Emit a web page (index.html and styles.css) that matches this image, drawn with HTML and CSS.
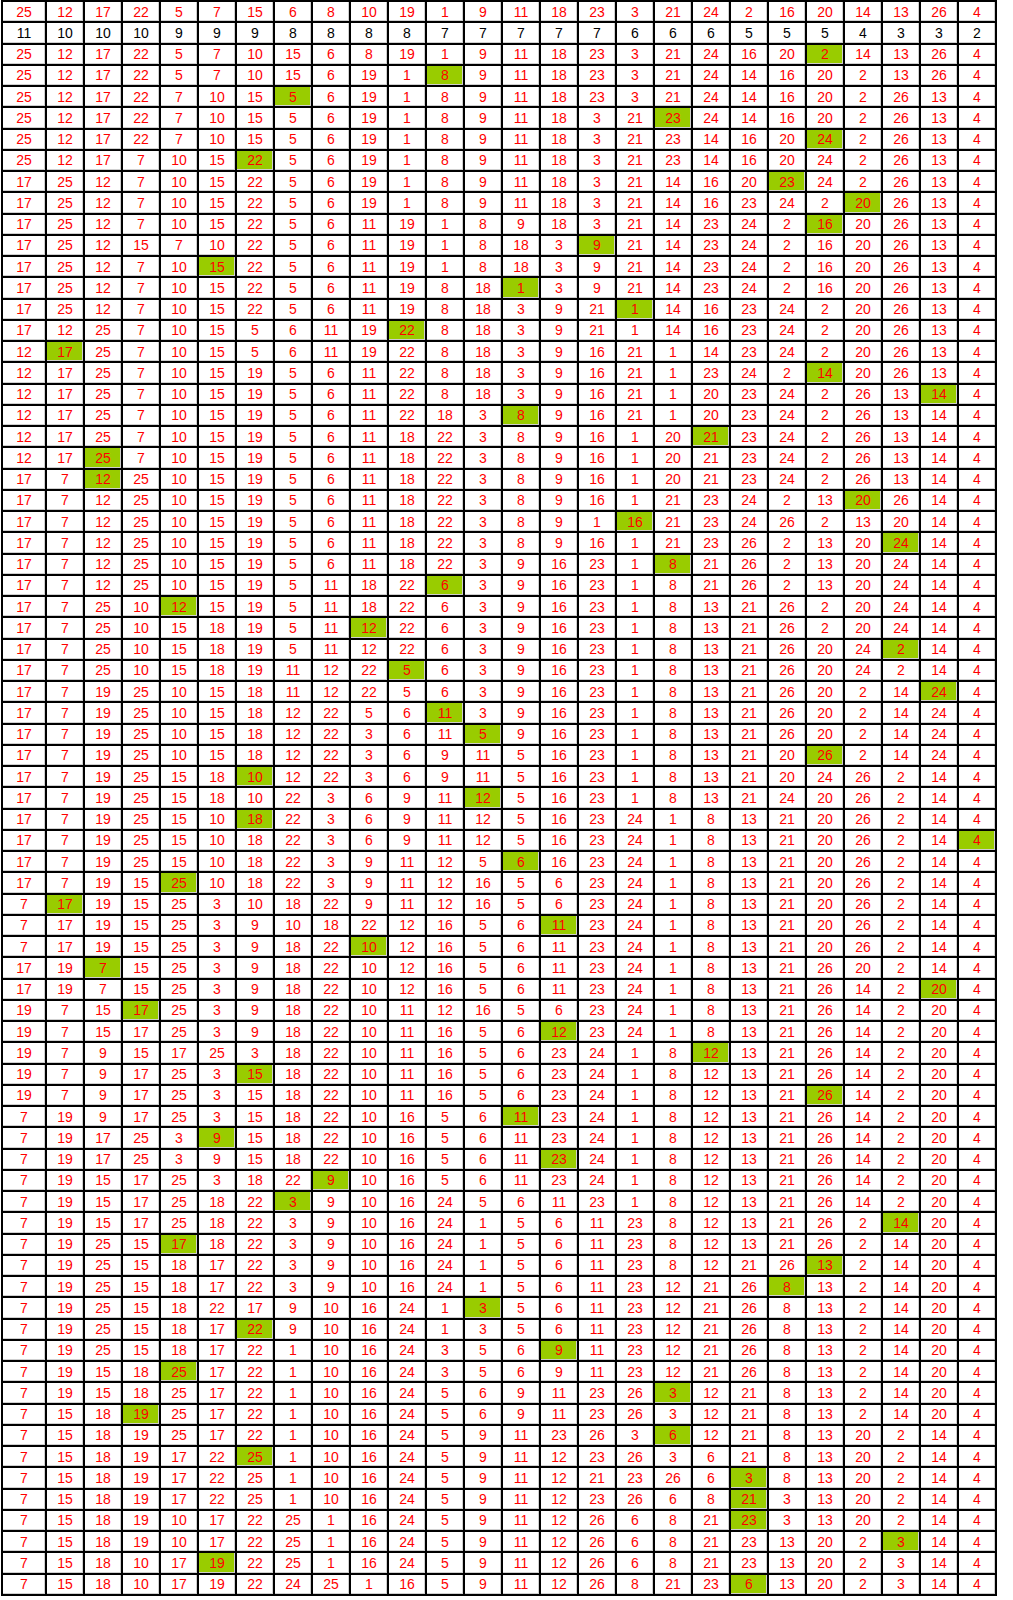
FILE: index.html
```html
<!DOCTYPE html>
<html>
<head>
<meta charset="utf-8">
<title>Table</title>
<link rel="stylesheet" href="styles.css">
</head>
<body>
<table class="grid">
<tbody>
<tr><td>25<td>12<td>17<td>22<td>5<td>7<td>15<td>6<td>8<td>10<td>19<td>1<td>9<td>11<td>18<td>23<td>3<td>21<td>24<td>2<td>16<td>20<td>14<td>13<td>26<td>4
<tr class="count"><td>11<td>10<td>10<td>10<td>9<td>9<td>9<td>8<td>8<td>8<td>8<td>7<td>7<td>7<td>7<td>7<td>6<td>6<td>6<td>5<td>5<td>5<td>4<td>3<td>3<td>2
<tr><td>25<td>12<td>17<td>22<td>5<td>7<td>10<td>15<td>6<td>8<td>19<td>1<td>9<td>11<td>18<td>23<td>3<td>21<td>24<td>16<td>20<td class="h">2<td>14<td>13<td>26<td>4
<tr><td>25<td>12<td>17<td>22<td>5<td>7<td>10<td>15<td>6<td>19<td>1<td class="h">8<td>9<td>11<td>18<td>23<td>3<td>21<td>24<td>14<td>16<td>20<td>2<td>13<td>26<td>4
<tr><td>25<td>12<td>17<td>22<td>7<td>10<td>15<td class="h">5<td>6<td>19<td>1<td>8<td>9<td>11<td>18<td>23<td>3<td>21<td>24<td>14<td>16<td>20<td>2<td>26<td>13<td>4
<tr><td>25<td>12<td>17<td>22<td>7<td>10<td>15<td>5<td>6<td>19<td>1<td>8<td>9<td>11<td>18<td>3<td>21<td class="h">23<td>24<td>14<td>16<td>20<td>2<td>26<td>13<td>4
<tr><td>25<td>12<td>17<td>22<td>7<td>10<td>15<td>5<td>6<td>19<td>1<td>8<td>9<td>11<td>18<td>3<td>21<td>23<td>14<td>16<td>20<td class="h">24<td>2<td>26<td>13<td>4
<tr><td>25<td>12<td>17<td>7<td>10<td>15<td class="h">22<td>5<td>6<td>19<td>1<td>8<td>9<td>11<td>18<td>3<td>21<td>23<td>14<td>16<td>20<td>24<td>2<td>26<td>13<td>4
<tr><td>17<td>25<td>12<td>7<td>10<td>15<td>22<td>5<td>6<td>19<td>1<td>8<td>9<td>11<td>18<td>3<td>21<td>14<td>16<td>20<td class="h">23<td>24<td>2<td>26<td>13<td>4
<tr><td>17<td>25<td>12<td>7<td>10<td>15<td>22<td>5<td>6<td>19<td>1<td>8<td>9<td>11<td>18<td>3<td>21<td>14<td>16<td>23<td>24<td>2<td class="h">20<td>26<td>13<td>4
<tr><td>17<td>25<td>12<td>7<td>10<td>15<td>22<td>5<td>6<td>11<td>19<td>1<td>8<td>9<td>18<td>3<td>21<td>14<td>23<td>24<td>2<td class="h">16<td>20<td>26<td>13<td>4
<tr><td>17<td>25<td>12<td>15<td>7<td>10<td>22<td>5<td>6<td>11<td>19<td>1<td>8<td>18<td>3<td class="h">9<td>21<td>14<td>23<td>24<td>2<td>16<td>20<td>26<td>13<td>4
<tr><td>17<td>25<td>12<td>7<td>10<td class="h">15<td>22<td>5<td>6<td>11<td>19<td>1<td>8<td>18<td>3<td>9<td>21<td>14<td>23<td>24<td>2<td>16<td>20<td>26<td>13<td>4
<tr><td>17<td>25<td>12<td>7<td>10<td>15<td>22<td>5<td>6<td>11<td>19<td>8<td>18<td class="h">1<td>3<td>9<td>21<td>14<td>23<td>24<td>2<td>16<td>20<td>26<td>13<td>4
<tr><td>17<td>25<td>12<td>7<td>10<td>15<td>22<td>5<td>6<td>11<td>19<td>8<td>18<td>3<td>9<td>21<td class="h">1<td>14<td>16<td>23<td>24<td>2<td>20<td>26<td>13<td>4
<tr><td>17<td>12<td>25<td>7<td>10<td>15<td>5<td>6<td>11<td>19<td class="h">22<td>8<td>18<td>3<td>9<td>21<td>1<td>14<td>16<td>23<td>24<td>2<td>20<td>26<td>13<td>4
<tr><td>12<td class="h">17<td>25<td>7<td>10<td>15<td>5<td>6<td>11<td>19<td>22<td>8<td>18<td>3<td>9<td>16<td>21<td>1<td>14<td>23<td>24<td>2<td>20<td>26<td>13<td>4
<tr><td>12<td>17<td>25<td>7<td>10<td>15<td>19<td>5<td>6<td>11<td>22<td>8<td>18<td>3<td>9<td>16<td>21<td>1<td>23<td>24<td>2<td class="h">14<td>20<td>26<td>13<td>4
<tr><td>12<td>17<td>25<td>7<td>10<td>15<td>19<td>5<td>6<td>11<td>22<td>8<td>18<td>3<td>9<td>16<td>21<td>1<td>20<td>23<td>24<td>2<td>26<td>13<td class="h">14<td>4
<tr><td>12<td>17<td>25<td>7<td>10<td>15<td>19<td>5<td>6<td>11<td>22<td>18<td>3<td class="h">8<td>9<td>16<td>21<td>1<td>20<td>23<td>24<td>2<td>26<td>13<td>14<td>4
<tr><td>12<td>17<td>25<td>7<td>10<td>15<td>19<td>5<td>6<td>11<td>18<td>22<td>3<td>8<td>9<td>16<td>1<td>20<td class="h">21<td>23<td>24<td>2<td>26<td>13<td>14<td>4
<tr><td>12<td>17<td class="h">25<td>7<td>10<td>15<td>19<td>5<td>6<td>11<td>18<td>22<td>3<td>8<td>9<td>16<td>1<td>20<td>21<td>23<td>24<td>2<td>26<td>13<td>14<td>4
<tr><td>17<td>7<td class="h">12<td>25<td>10<td>15<td>19<td>5<td>6<td>11<td>18<td>22<td>3<td>8<td>9<td>16<td>1<td>20<td>21<td>23<td>24<td>2<td>26<td>13<td>14<td>4
<tr><td>17<td>7<td>12<td>25<td>10<td>15<td>19<td>5<td>6<td>11<td>18<td>22<td>3<td>8<td>9<td>16<td>1<td>21<td>23<td>24<td>2<td>13<td class="h">20<td>26<td>14<td>4
<tr><td>17<td>7<td>12<td>25<td>10<td>15<td>19<td>5<td>6<td>11<td>18<td>22<td>3<td>8<td>9<td>1<td class="h">16<td>21<td>23<td>24<td>26<td>2<td>13<td>20<td>14<td>4
<tr><td>17<td>7<td>12<td>25<td>10<td>15<td>19<td>5<td>6<td>11<td>18<td>22<td>3<td>8<td>9<td>16<td>1<td>21<td>23<td>26<td>2<td>13<td>20<td class="h">24<td>14<td>4
<tr><td>17<td>7<td>12<td>25<td>10<td>15<td>19<td>5<td>6<td>11<td>18<td>22<td>3<td>9<td>16<td>23<td>1<td class="h">8<td>21<td>26<td>2<td>13<td>20<td>24<td>14<td>4
<tr><td>17<td>7<td>12<td>25<td>10<td>15<td>19<td>5<td>11<td>18<td>22<td class="h">6<td>3<td>9<td>16<td>23<td>1<td>8<td>21<td>26<td>2<td>13<td>20<td>24<td>14<td>4
<tr><td>17<td>7<td>25<td>10<td class="h">12<td>15<td>19<td>5<td>11<td>18<td>22<td>6<td>3<td>9<td>16<td>23<td>1<td>8<td>13<td>21<td>26<td>2<td>20<td>24<td>14<td>4
<tr><td>17<td>7<td>25<td>10<td>15<td>18<td>19<td>5<td>11<td class="h">12<td>22<td>6<td>3<td>9<td>16<td>23<td>1<td>8<td>13<td>21<td>26<td>2<td>20<td>24<td>14<td>4
<tr><td>17<td>7<td>25<td>10<td>15<td>18<td>19<td>5<td>11<td>12<td>22<td>6<td>3<td>9<td>16<td>23<td>1<td>8<td>13<td>21<td>26<td>20<td>24<td class="h">2<td>14<td>4
<tr><td>17<td>7<td>25<td>10<td>15<td>18<td>19<td>11<td>12<td>22<td class="h">5<td>6<td>3<td>9<td>16<td>23<td>1<td>8<td>13<td>21<td>26<td>20<td>24<td>2<td>14<td>4
<tr><td>17<td>7<td>19<td>25<td>10<td>15<td>18<td>11<td>12<td>22<td>5<td>6<td>3<td>9<td>16<td>23<td>1<td>8<td>13<td>21<td>26<td>20<td>2<td>14<td class="h">24<td>4
<tr><td>17<td>7<td>19<td>25<td>10<td>15<td>18<td>12<td>22<td>5<td>6<td class="h">11<td>3<td>9<td>16<td>23<td>1<td>8<td>13<td>21<td>26<td>20<td>2<td>14<td>24<td>4
<tr><td>17<td>7<td>19<td>25<td>10<td>15<td>18<td>12<td>22<td>3<td>6<td>11<td class="h">5<td>9<td>16<td>23<td>1<td>8<td>13<td>21<td>26<td>20<td>2<td>14<td>24<td>4
<tr><td>17<td>7<td>19<td>25<td>10<td>15<td>18<td>12<td>22<td>3<td>6<td>9<td>11<td>5<td>16<td>23<td>1<td>8<td>13<td>21<td>20<td class="h">26<td>2<td>14<td>24<td>4
<tr><td>17<td>7<td>19<td>25<td>15<td>18<td class="h">10<td>12<td>22<td>3<td>6<td>9<td>11<td>5<td>16<td>23<td>1<td>8<td>13<td>21<td>20<td>24<td>26<td>2<td>14<td>4
<tr><td>17<td>7<td>19<td>25<td>15<td>18<td>10<td>22<td>3<td>6<td>9<td>11<td class="h">12<td>5<td>16<td>23<td>1<td>8<td>13<td>21<td>24<td>20<td>26<td>2<td>14<td>4
<tr><td>17<td>7<td>19<td>25<td>15<td>10<td class="h">18<td>22<td>3<td>6<td>9<td>11<td>12<td>5<td>16<td>23<td>24<td>1<td>8<td>13<td>21<td>20<td>26<td>2<td>14<td>4
<tr><td>17<td>7<td>19<td>25<td>15<td>10<td>18<td>22<td>3<td>6<td>9<td>11<td>12<td>5<td>16<td>23<td>24<td>1<td>8<td>13<td>21<td>20<td>26<td>2<td>14<td class="h">4
<tr><td>17<td>7<td>19<td>25<td>15<td>10<td>18<td>22<td>3<td>9<td>11<td>12<td>5<td class="h">6<td>16<td>23<td>24<td>1<td>8<td>13<td>21<td>20<td>26<td>2<td>14<td>4
<tr><td>17<td>7<td>19<td>15<td class="h">25<td>10<td>18<td>22<td>3<td>9<td>11<td>12<td>16<td>5<td>6<td>23<td>24<td>1<td>8<td>13<td>21<td>20<td>26<td>2<td>14<td>4
<tr><td>7<td class="h">17<td>19<td>15<td>25<td>3<td>10<td>18<td>22<td>9<td>11<td>12<td>16<td>5<td>6<td>23<td>24<td>1<td>8<td>13<td>21<td>20<td>26<td>2<td>14<td>4
<tr><td>7<td>17<td>19<td>15<td>25<td>3<td>9<td>10<td>18<td>22<td>12<td>16<td>5<td>6<td class="h">11<td>23<td>24<td>1<td>8<td>13<td>21<td>20<td>26<td>2<td>14<td>4
<tr><td>7<td>17<td>19<td>15<td>25<td>3<td>9<td>18<td>22<td class="h">10<td>12<td>16<td>5<td>6<td>11<td>23<td>24<td>1<td>8<td>13<td>21<td>20<td>26<td>2<td>14<td>4
<tr><td>17<td>19<td class="h">7<td>15<td>25<td>3<td>9<td>18<td>22<td>10<td>12<td>16<td>5<td>6<td>11<td>23<td>24<td>1<td>8<td>13<td>21<td>26<td>20<td>2<td>14<td>4
<tr><td>17<td>19<td>7<td>15<td>25<td>3<td>9<td>18<td>22<td>10<td>12<td>16<td>5<td>6<td>11<td>23<td>24<td>1<td>8<td>13<td>21<td>26<td>14<td>2<td class="h">20<td>4
<tr><td>19<td>7<td>15<td class="h">17<td>25<td>3<td>9<td>18<td>22<td>10<td>11<td>12<td>16<td>5<td>6<td>23<td>24<td>1<td>8<td>13<td>21<td>26<td>14<td>2<td>20<td>4
<tr><td>19<td>7<td>15<td>17<td>25<td>3<td>9<td>18<td>22<td>10<td>11<td>16<td>5<td>6<td class="h">12<td>23<td>24<td>1<td>8<td>13<td>21<td>26<td>14<td>2<td>20<td>4
<tr><td>19<td>7<td>9<td>15<td>17<td>25<td>3<td>18<td>22<td>10<td>11<td>16<td>5<td>6<td>23<td>24<td>1<td>8<td class="h">12<td>13<td>21<td>26<td>14<td>2<td>20<td>4
<tr><td>19<td>7<td>9<td>17<td>25<td>3<td class="h">15<td>18<td>22<td>10<td>11<td>16<td>5<td>6<td>23<td>24<td>1<td>8<td>12<td>13<td>21<td>26<td>14<td>2<td>20<td>4
<tr><td>19<td>7<td>9<td>17<td>25<td>3<td>15<td>18<td>22<td>10<td>11<td>16<td>5<td>6<td>23<td>24<td>1<td>8<td>12<td>13<td>21<td class="h">26<td>14<td>2<td>20<td>4
<tr><td>7<td>19<td>9<td>17<td>25<td>3<td>15<td>18<td>22<td>10<td>16<td>5<td>6<td class="h">11<td>23<td>24<td>1<td>8<td>12<td>13<td>21<td>26<td>14<td>2<td>20<td>4
<tr><td>7<td>19<td>17<td>25<td>3<td class="h">9<td>15<td>18<td>22<td>10<td>16<td>5<td>6<td>11<td>23<td>24<td>1<td>8<td>12<td>13<td>21<td>26<td>14<td>2<td>20<td>4
<tr><td>7<td>19<td>17<td>25<td>3<td>9<td>15<td>18<td>22<td>10<td>16<td>5<td>6<td>11<td class="h">23<td>24<td>1<td>8<td>12<td>13<td>21<td>26<td>14<td>2<td>20<td>4
<tr><td>7<td>19<td>15<td>17<td>25<td>3<td>18<td>22<td class="h">9<td>10<td>16<td>5<td>6<td>11<td>23<td>24<td>1<td>8<td>12<td>13<td>21<td>26<td>14<td>2<td>20<td>4
<tr><td>7<td>19<td>15<td>17<td>25<td>18<td>22<td class="h">3<td>9<td>10<td>16<td>24<td>5<td>6<td>11<td>23<td>1<td>8<td>12<td>13<td>21<td>26<td>14<td>2<td>20<td>4
<tr><td>7<td>19<td>15<td>17<td>25<td>18<td>22<td>3<td>9<td>10<td>16<td>24<td>1<td>5<td>6<td>11<td>23<td>8<td>12<td>13<td>21<td>26<td>2<td class="h">14<td>20<td>4
<tr><td>7<td>19<td>25<td>15<td class="h">17<td>18<td>22<td>3<td>9<td>10<td>16<td>24<td>1<td>5<td>6<td>11<td>23<td>8<td>12<td>13<td>21<td>26<td>2<td>14<td>20<td>4
<tr><td>7<td>19<td>25<td>15<td>18<td>17<td>22<td>3<td>9<td>10<td>16<td>24<td>1<td>5<td>6<td>11<td>23<td>8<td>12<td>21<td>26<td class="h">13<td>2<td>14<td>20<td>4
<tr><td>7<td>19<td>25<td>15<td>18<td>17<td>22<td>3<td>9<td>10<td>16<td>24<td>1<td>5<td>6<td>11<td>23<td>12<td>21<td>26<td class="h">8<td>13<td>2<td>14<td>20<td>4
<tr><td>7<td>19<td>25<td>15<td>18<td>22<td>17<td>9<td>10<td>16<td>24<td>1<td class="h">3<td>5<td>6<td>11<td>23<td>12<td>21<td>26<td>8<td>13<td>2<td>14<td>20<td>4
<tr><td>7<td>19<td>25<td>15<td>18<td>17<td class="h">22<td>9<td>10<td>16<td>24<td>1<td>3<td>5<td>6<td>11<td>23<td>12<td>21<td>26<td>8<td>13<td>2<td>14<td>20<td>4
<tr><td>7<td>19<td>25<td>15<td>18<td>17<td>22<td>1<td>10<td>16<td>24<td>3<td>5<td>6<td class="h">9<td>11<td>23<td>12<td>21<td>26<td>8<td>13<td>2<td>14<td>20<td>4
<tr><td>7<td>19<td>15<td>18<td class="h">25<td>17<td>22<td>1<td>10<td>16<td>24<td>3<td>5<td>6<td>9<td>11<td>23<td>12<td>21<td>26<td>8<td>13<td>2<td>14<td>20<td>4
<tr><td>7<td>19<td>15<td>18<td>25<td>17<td>22<td>1<td>10<td>16<td>24<td>5<td>6<td>9<td>11<td>23<td>26<td class="h">3<td>12<td>21<td>8<td>13<td>2<td>14<td>20<td>4
<tr><td>7<td>15<td>18<td class="h">19<td>25<td>17<td>22<td>1<td>10<td>16<td>24<td>5<td>6<td>9<td>11<td>23<td>26<td>3<td>12<td>21<td>8<td>13<td>2<td>14<td>20<td>4
<tr><td>7<td>15<td>18<td>19<td>25<td>17<td>22<td>1<td>10<td>16<td>24<td>5<td>9<td>11<td>23<td>26<td>3<td class="h">6<td>12<td>21<td>8<td>13<td>20<td>2<td>14<td>4
<tr><td>7<td>15<td>18<td>19<td>17<td>22<td class="h">25<td>1<td>10<td>16<td>24<td>5<td>9<td>11<td>12<td>23<td>26<td>3<td>6<td>21<td>8<td>13<td>20<td>2<td>14<td>4
<tr><td>7<td>15<td>18<td>19<td>17<td>22<td>25<td>1<td>10<td>16<td>24<td>5<td>9<td>11<td>12<td>21<td>23<td>26<td>6<td class="h">3<td>8<td>13<td>20<td>2<td>14<td>4
<tr><td>7<td>15<td>18<td>19<td>17<td>22<td>25<td>1<td>10<td>16<td>24<td>5<td>9<td>11<td>12<td>23<td>26<td>6<td>8<td class="h">21<td>3<td>13<td>20<td>2<td>14<td>4
<tr><td>7<td>15<td>18<td>19<td>10<td>17<td>22<td>25<td>1<td>16<td>24<td>5<td>9<td>11<td>12<td>26<td>6<td>8<td>21<td class="h">23<td>3<td>13<td>20<td>2<td>14<td>4
<tr><td>7<td>15<td>18<td>19<td>10<td>17<td>22<td>25<td>1<td>16<td>24<td>5<td>9<td>11<td>12<td>26<td>6<td>8<td>21<td>23<td>13<td>20<td>2<td class="h">3<td>14<td>4
<tr><td>7<td>15<td>18<td>10<td>17<td class="h">19<td>22<td>25<td>1<td>16<td>24<td>5<td>9<td>11<td>12<td>26<td>6<td>8<td>21<td>23<td>13<td>20<td>2<td>3<td>14<td>4
<tr><td>7<td>15<td>18<td>10<td>17<td>19<td>22<td>24<td>25<td>1<td>16<td>5<td>9<td>11<td>12<td>26<td>8<td>21<td>23<td class="h">6<td>13<td>20<td>2<td>3<td>14<td>4
</tbody>
</table>
</body>
</html>
```

FILE: styles.css
```css
html, body {
  margin: 0;
  padding: 0;
  background: #ffffff;
}

.grid {
  margin: 0 0 0 1px;
  width: 996px;
  table-layout: fixed;
  border-collapse: separate;
  border-spacing: 0;
  border: 1px solid #000;
  font-family: "Liberation Sans", Arial, sans-serif;
  font-size: 14px;
  color: #ff0000;
}

.grid tr {
  height: 21.25px;
}

.grid td {
  box-sizing: border-box;
  width: 38px;
  padding: 0;
  border: 1px solid #000;
  text-align: center;
  vertical-align: middle;
  line-height: 16px;
  background: #ffffff;
  box-shadow: inset -1px -1px 0 #cfcfcf;
}

.grid td:first-child {
  width: 44px;
}

.grid .count td {
  color: #000;
}

.grid td.h {
  background: #99cc00;
}
```
